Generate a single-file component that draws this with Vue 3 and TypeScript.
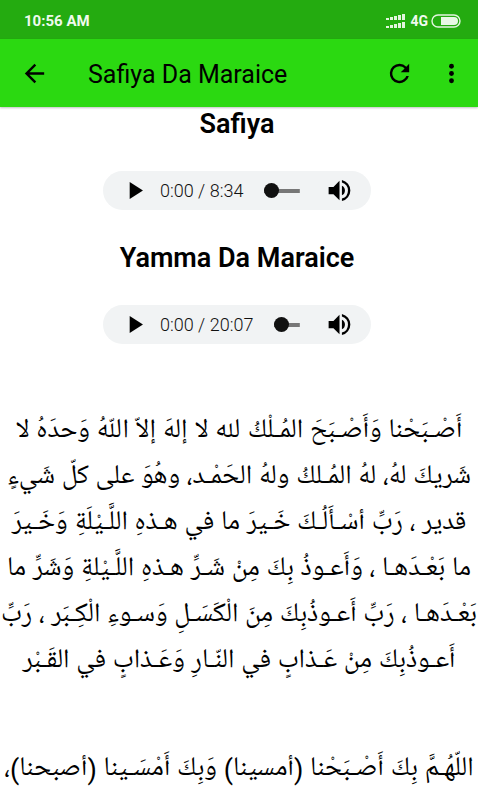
<script setup lang="ts">
import { ref } from 'vue'

interface Track {
  id: string
  title: string
  duration: string
  seconds: number
}

const tracks: Track[] = [
  { id: 'safiya', title: 'Safiya', duration: '8:34', seconds: 514 },
  { id: 'yamma', title: 'Yamma Da Maraice', duration: '20:07', seconds: 1207 },
]

const positions = ref<number[]>([0, 0])

const prayers: string[][] = [
  [
    'أَصْـبَحْنا وَأَصْـبَحَ المُـلْكُ لله لا إلهَ إلاّ اللّهُ وَحدَهُ لا',
    'شَريكَ لهُ، لهُ المُـلكُ ولهُ الحَمْـد، وهُوَ على كلّ شَيءٍ',
    'قدير ، رَبِّ أسْـأَلُـكَ خَـيرَ ما في هـذهِ اللَّـيْلَةِ وَخَـيرَ',
    'ما بَعْـدَهـا ، وَأَعـوذُ بِكَ مِنْ شَـرِّ هـذهِ اللَّـيْلةِ وَشَرِّ ما',
    'بَعْـدَهـا ، رَبِّ أَعـوذُبِكَ مِنَ الْكَسَـلِ وَسـوءِ الْكِـبَر ، رَبِّ',
    'أَعـوذُبِكَ مِنْ عَـذابٍ في النّـارِ وَعَـذابٍ في القَـبْر',
  ],
  ['اللّهُـمَّ بِكَ أَصْـبَحْنا (أمسينا) وَبِكَ أَمْسَـينا (أصبحنا)،'],
]

const bars = [2, 3, 4, 5, 6]
</script>

<template>
  <div class="screen">
    <div class="status">
      <span>10:56 AM</span>
      <div class="indicators">
        <svg width="19" height="14" viewBox="0 0 19 14" fill="#e3f5df" aria-hidden="true">
          <g v-for="(h, i) in bars" :key="i">
            <rect :x="i * 4" :y="6 - h" width="3" :height="h" />
            <rect :x="i * 4" :y="14 - h" width="3" :height="h" />
          </g>
        </svg>
        <span class="network">4G</span>
        <svg width="30" height="14" viewBox="0 0 30 14" aria-hidden="true">
          <rect x="1" y="1" width="28" height="12" rx="6" fill="none" stroke="#e3f5df" stroke-width="1.4" />
          <path d="M10 3h13a4 4 0 0 1 0 8H10z" fill="#e9f8e6" />
        </svg>
      </div>
    </div>

    <header class="toolbar">
      <button class="icon" type="button" aria-label="Back">
        <svg viewBox="0 0 24 24"><path d="M20 11H7.83l5.59-5.59L12 4l-8 8 8 8 1.41-1.41L7.83 13H20z" /></svg>
      </button>
      <h1>Safiya Da Maraice</h1>
      <button class="icon" type="button" aria-label="Refresh">
        <svg viewBox="0 0 24 24"><path d="M17.65 6.35A7.96 7.96 0 0 0 12 4a8 8 0 1 0 7.73 10h-2.08A6 6 0 1 1 12 6c1.66 0 3.14.69 4.22 1.78L13 11h7V4z" /></svg>
      </button>
      <button class="icon" type="button" aria-label="More options">
        <svg viewBox="0 0 24 24"><circle cx="12" cy="6" r="2" /><circle cx="12" cy="12" r="2" /><circle cx="12" cy="18" r="2" /></svg>
      </button>
    </header>

    <main>
      <section v-for="(track, i) in tracks" :key="track.id" class="track">
        <h2>{{ track.title }}</h2>
        <div class="player">
          <button class="icon" type="button" :aria-label="`Play ${track.title}`">
            <svg viewBox="0 0 24 24"><path d="M8 5v14l11-7z" /></svg>
          </button>
          <span class="time">0:00 / {{ track.duration }}</span>
          <input v-model.number="positions[i]" class="seek" type="range" min="0" :max="track.seconds" :aria-label="`Seek ${track.title}`" />
          <button class="icon" type="button" :aria-label="`Mute ${track.title}`">
            <svg viewBox="0 0 24 24"><path d="M3 9v6h4l5 5V4L7 9zm13.5 3A4.5 4.5 0 0 0 14 7.97v8.05A4.5 4.5 0 0 0 16.5 12zM14 3.23v2.06a7 7 0 0 1 0 13.42v2.06a9 9 0 0 0 0-17.54z" /></svg>
          </button>
        </div>
      </section>

      <article lang="ar" dir="rtl">
        <p v-for="(prayer, i) in prayers" :key="i">
          <span v-for="line in prayer" :key="line" class="line">{{ line }}</span>
        </p>
      </article>
    </main>
  </div>
</template>

<style>
body {
  margin: 0;
  background: #fff;
  overflow: hidden;
}
</style>

<style scoped>
.screen {
  height: 100vh;
  overflow: hidden;
  font-family: Roboto, "Liberation Sans", sans-serif;
  color: #000;
}

.status {
  display: flex;
  align-items: center;
  justify-content: space-between;
  height: 39px;
  padding: 3px 17px 0 24px;
  box-sizing: border-box;
  background: #24ab10;
  color: #f0faee;
  font-size: 15px;
  font-weight: 700;
}

.indicators {
  display: flex;
  align-items: center;
}

.network {
  margin: 0 3px 0 5px;
  font-size: 14px;
}

.toolbar {
  display: flex;
  align-items: center;
  height: 68px;
  padding: 0 12px 0 20px;
  box-sizing: border-box;
  background: #2bd911;
  box-shadow: 0 1px 2px rgba(0, 0, 0, 0.25);
}

h1 {
  flex: 1;
  margin: 4px 0 0 39px;
  font-size: 25px;
  font-weight: 400;
  line-height: 32px;
}

.icon {
  flex: none;
  width: 29px;
  height: 29px;
  padding: 0;
  border: 0;
  background: none;
  color: inherit;
}

.icon + .icon {
  margin-left: 23px;
}

.icon svg {
  display: block;
  width: 100%;
  height: 100%;
  fill: currentColor;
}

h2 {
  margin: 0;
  font-size: 27px;
  font-weight: 600;
  line-height: 32px;
  text-align: center;
}

.track {
  padding: 1px 4px 31px 0;
}

.player {
  display: flex;
  align-items: center;
  width: 268px;
  height: 39px;
  margin: 31px auto 0;
  padding: 0 17px;
  box-sizing: border-box;
  border-radius: 20px;
  background: #f1f3f4;
}

.time {
  margin-left: 11px;
  color: #111;
  font-size: 18px;
  font-weight: 300;
  white-space: nowrap;
}

.seek {
  flex: 1;
  min-width: 0;
  height: 16px;
  margin: 0 25px 0 21px;
  appearance: none;
  background: linear-gradient(#777, #777) center / 100% 4px no-repeat;
}

.seek::-webkit-slider-thumb {
  appearance: none;
  width: 15px;
  height: 15px;
  border-radius: 50%;
  background: #111;
}

article {
  padding-top: 34px;
  font-family: Roboto, "Noto Naskh Arabic UI", "Noto Sans Arabic", "DejaVu Sans", sans-serif;
  font-size: 27px;
  line-height: 46px;
  text-align: center;
}

p {
  margin: 0 0 62px;
}

.line {
  display: block;
  white-space: nowrap;
}
</style>
